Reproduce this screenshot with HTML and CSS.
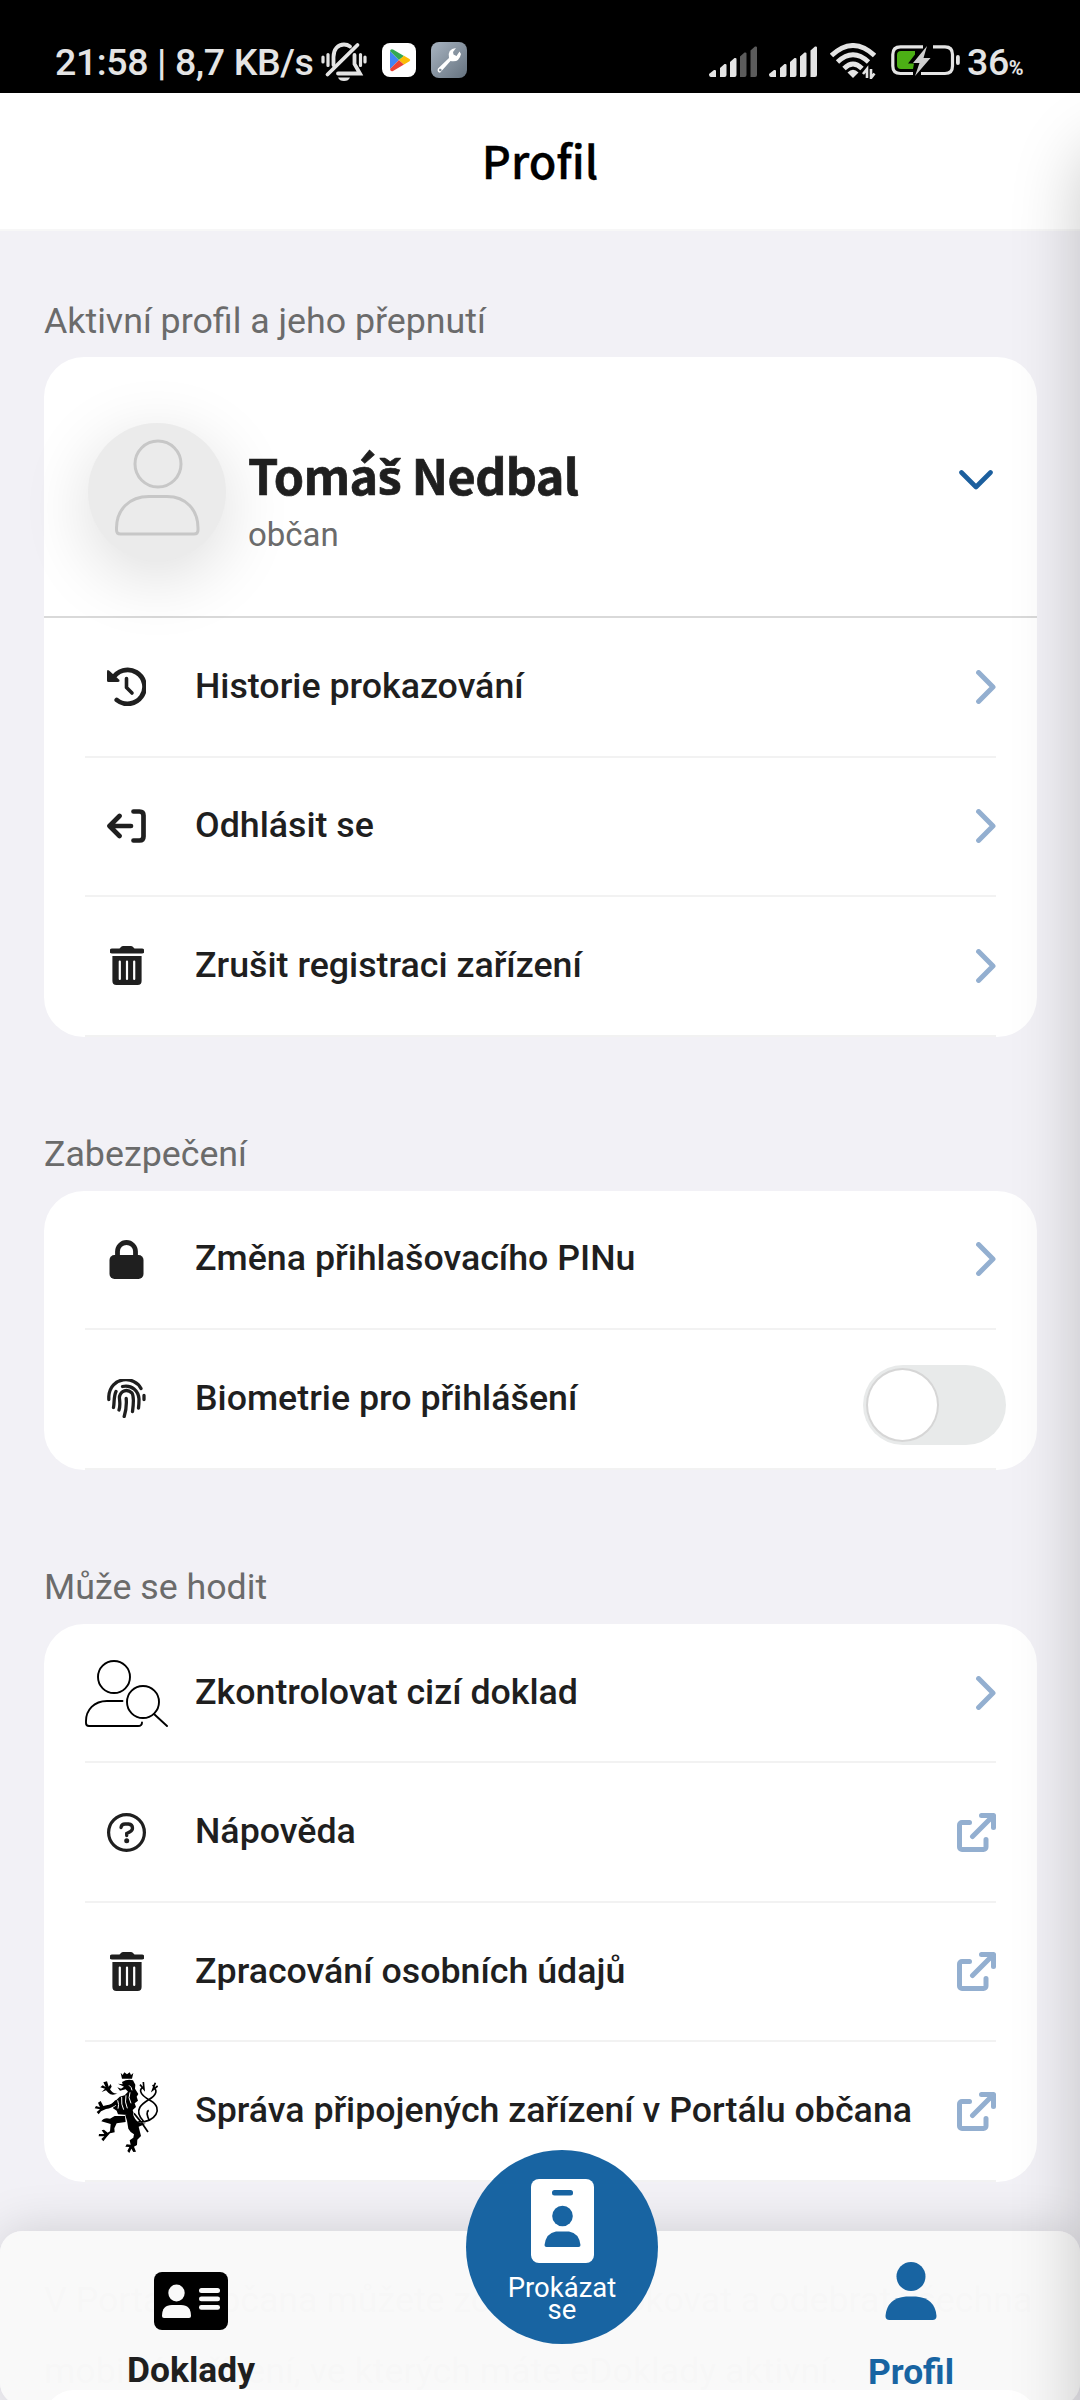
FILE: index.html
```html
<!DOCTYPE html>
<html lang="cs">
<head>
<meta charset="utf-8">
<title>Profil</title>
<link rel="stylesheet" href="styles.css">
</head>
<body>
<svg class="defs" width="0" height="0">
  <symbol id="chevron" viewBox="0 0 20 34"><path d="M2.6 2.6 17 17 2.6 31.4" fill="none" stroke="currentColor" stroke-width="5" stroke-linecap="round" stroke-linejoin="round"/></symbol>
  <symbol id="external" viewBox="0 0 39 39"><path d="M12.5 9.5H5a2.5 2.5 0 0 0-2.500 2.500V34a2.500 2.500 0 0 0 2.500 2.500H26.500a2.500 2.500 0 0 0 2.500-2.500V26.500M24.500 2.500H36.500V14.500M36 3 15.500 23.500" fill="none" stroke="currentColor" stroke-width="5" stroke-linecap="round" stroke-linejoin="round"/></symbol>
  <symbol id="trash" viewBox="0 0 34 39"><path d="M2 2.600H9.500L11.500.6Q12 0 13 0H21Q22 0 22.500.6L24.500 2.600H32A2.400 2.400 0 0 1 32 7.500H2A2.400 2.400 0 0 1 2 2.600ZM2.400 10H31.600V35Q31.600 39 27.600 39H6.400Q2.400 39 2.400 35Z" fill="currentColor"/><path d="M9.800 15.500V33M17 15.500V33M24.200 15.500V33" stroke="#fff" stroke-width="2.200" stroke-linecap="round"/></symbol>
</svg>
<div class="screen">
  <div class="status">
    <span class="clock">21:58 | 8,7 KB/s</span>
    <svg class="bell" width="46" height="40" viewBox="0 0 46 40" fill="none" stroke="#e4e4e4" stroke-width="3.200" stroke-linecap="round"><path d="M2 15v5M7 12.500v11M39.500 12.500v11M44 15v5"/><path d="M12.500 23V15C12.500 7 17 2.500 23 2.500Q26.500 2.500 29 4.500M33.500 13V22L39 31.500H17" stroke-width="3.800"/><path d="M36.500 3 6.500 32.500" stroke-width="3.800"/><path d="M17 35.500H29Q27.500 39 23 39T17 35.500Z" fill="#e4e4e4" stroke="none"/></svg>
    <svg class="play" width="34" height="34" viewBox="0 0 34 34"><rect width="34" height="34" rx="8" fill="#fff"/><path d="M8 8V26L17 17Z" fill="#4285f4"/><path d="M8 8Q8.500 5.500 11 6.500L22 13 17 17Z" fill="#34a853"/><path d="M8 26Q8.500 29 11 28L22 21.500 17 17Z" fill="#ea4335"/><path d="M22 12.800 27.500 16Q29 17 27.500 18.200L22 21.500 17 17Z" fill="#fbbc04"/></svg>
    <svg class="wrench" width="36" height="36" viewBox="0 0 36 36"><defs><linearGradient id="steel" x1="0" y1="0" x2="1" y2="1"><stop stop-color="#a8b4c1"/><stop offset="1" stop-color="#65727f"/></linearGradient></defs><rect width="36" height="36" rx="8" fill="url(#steel)"/><path d="M25 6Q16 7 18 16L7 26.500Q5.500 30 9 30.800L19.500 19Q28 21 30 12L28.500 9.500 25.500 14 22.500 12.500 22 10Z" fill="#fff"/><circle cx="9.300" cy="28" r="1.300" fill="#7e8b98"/></svg>
    <span class="spacer"></span>
    <svg class="signal" width="48" height="32" viewBox="0 0 48 32" fill="#e4e4e4"><path d="M0 28 5 24Q7 23.500 7 25V31H2Q0 31 0 28ZM11 22 15.500 18Q17.500 17.500 17.500 19V29Q17.500 31 15.500 31H11ZM21 16 25.500 12Q27.500 11.500 27.500 13V29Q27.500 31 25.500 31H21Z"/><path d="M31 10.500 35.500 6.500Q37.500 6 37.500 7.500V29Q37.500 31 35.500 31H31ZM41.500 4.500 46 .5Q48 0 48 1.500V29Q48 31 46 31H41.500Z" fill="#5b5b5b"/></svg>
    <svg class="signal2" width="48" height="32" viewBox="0 0 48 32" fill="#e4e4e4"><path d="M0 28 5 24Q7 23.500 7 25V31H2Q0 31 0 28ZM11 22 15.500 18Q17.500 17.500 17.500 19V29Q17.500 31 15.500 31H11ZM21 16 25.500 12Q27.500 11.500 27.500 13V29Q27.500 31 25.500 31H21ZM31 10.500 35.500 6.500Q37.500 6 37.500 7.500V29Q37.500 31 35.500 31H31ZM41.500 4.500 46 .5Q48 0 48 1.500V29Q48 31 46 31H41.500Z"/></svg>
    <svg class="wifi" width="46" height="36" viewBox="0 0 46 36" fill="none" stroke="#e4e4e4" stroke-width="4.800"><path d="M1.500 12.500Q23-7.500 44.500 12.500M7.500 19Q23 4.500 38.500 19M14 25.500Q23 16.500 32 25.500"/><path d="M17.500 29.500Q23 24 28.500 29.500L23 35Z" fill="#e4e4e4" stroke="none"/><path d="M37 35V26L33 31M41 26V35L44.500 30.500" stroke-width="2.600"/></svg>
    <svg class="battery" width="69" height="32" viewBox="0 0 69 32"><path d="M32 1.800H9.500Q1.800 1.800 1.800 9.500V21Q1.800 28.500 9.500 28.500H22M42 1.800H54Q61.500 1.800 61.500 9.500V21Q61.500 28.500 54 28.500H30" fill="none" stroke="#e4e4e4" stroke-width="3.200"/><path d="M10 6H24V9.500L17 18.500H23L22 24H10Q6 24 6 20V10Q6 6 10 6Z" fill="#4caf15"/><path d="M36 1 22 18H28.500L24 31 39.500 13H32.500Z" fill="#cfcfcf"/><rect x="65" y="10" width="3.800" height="10" rx="1.900" fill="#e4e4e4"/></svg>
    <span class="percent">36<small>%</small></span>
  </div>

  <header class="topbar"><h1>Profil</h1></header>

  <main class="content">
    <h2 class="label first">Aktivní profil a jeho přepnutí</h2>
    <section class="card">
      <div class="person">
        <div class="avatar"><svg width="88" height="100" viewBox="0 0 88 100" fill="none" stroke="#c7c7c7" stroke-width="3"><circle cx="44" cy="26" r="23"/><path d="M35 58.500H53C72 58.500 84 72 84 90V92Q84 96 80 96H6.500Q2.500 96 2.500 92V90C2.500 72 15 58.500 35 58.500Z"/></svg></div>
        <div class="who"><div class="name">Tomá<span class="caron">š</span> Nedbal</div><div class="role">občan</div></div>
        <svg class="down" width="34" height="20" viewBox="0 0 34 20"><path d="M2.500 2.500 17 17 31.500 2.500" fill="none" stroke="#1c5f9e" stroke-width="4.600" stroke-linecap="round" stroke-linejoin="round"/></svg>
      </div>
      <div class="rows">
        <div class="row"><span class="icon"><svg width="39" height="39" viewBox="0 0 39 39"><path d="M5.500 12A17 17 0 1 1 9.800 33" fill="none" stroke="currentColor" stroke-width="4.800" stroke-linecap="round"/><path d="M0 4.500Q0 2 2 3.500L12.500 13Q13 15 11 15H1.500Q0 15 0 13.500Z" fill="currentColor"/><path d="M19.500 11.500V20.500L25 26" fill="none" stroke="currentColor" stroke-width="3.600" stroke-linecap="round" stroke-linejoin="round"/></svg></span><span class="text">Historie prokazování</span><svg class="go" width="20" height="34"><use href="#chevron"/></svg></div>
        <div class="row"><span class="icon"><svg width="39" height="34" viewBox="0 0 39 34" fill="none" stroke="currentColor" stroke-width="4.700" stroke-linecap="round" stroke-linejoin="round"><path d="M12.500 7 2.500 17 12.500 27M3.500 17H24M26.500 2.500H32.500Q36.500 2.500 36.500 6.500V27.500Q36.500 31.500 32.500 31.500H26.500"/></svg></span><span class="text">Odhlásit se</span><svg class="go" width="20" height="34"><use href="#chevron"/></svg></div>
        <div class="row"><span class="icon"><svg width="34" height="39"><use href="#trash"/></svg></span><span class="text">Zrušit registraci zařízení</span><svg class="go" width="20" height="34"><use href="#chevron"/></svg></div>
      </div>
    </section>

    <h2 class="label">Zabezpečení</h2>
    <section class="card">
      <div class="rows">
        <div class="row"><span class="icon"><svg width="35" height="39" viewBox="0 0 35 39"><rect x=".5" y="15" width="34" height="24" rx="5" fill="currentColor"/><path d="M8.500 17V11.500A9 9 0 0 1 26.500 11.500V17" fill="none" stroke="currentColor" stroke-width="4.800"/></svg></span><span class="text">Změna přihlašovacího PINu</span><svg class="go" width="20" height="34"><use href="#chevron"/></svg></div>
        <div class="row"><span class="icon"><svg width="39" height="39" viewBox="0 0 39 39" fill="none" stroke="currentColor" stroke-width="3.300" stroke-linecap="round"><path d="M1.800 20.500V17.500C3-3 28-3.500 34 9.500M37 16.500V20.500M6.500 28.500C7.500 23.500 6.500 18 9 12.500M15.500 7.500C25 5.500 31.500 12 32 20Q32 25 31.500 29M12 31C14 25 12 20 12.500 17.500 14 11.500 20 9.500 25 14 27.500 18 26.500 25 25.500 32.500M17.200 37.500Q20 28.500 19.200 19.500"/></svg></span><span class="text">Biometrie pro přihlášení</span><span class="toggle"><span class="knob"></span></span></div>
      </div>
    </section>

    <h2 class="label">Může se hodit</h2>
    <section class="card">
      <div class="rows">
        <div class="row"><span class="icon"><svg class="check" width="83" height="67" viewBox="0 0 83 67" fill="none" stroke="#000" stroke-width="1.900" stroke-linecap="round"><circle cx="29" cy="17" r="16"/><circle cx="58" cy="42" r="16"/><path d="M69 54 82 66M37.500 41H22C9 41 1 50 1 61V63Q1 66 4 66H53Q57 66 57 62.500"/></svg></span><span class="text">Zkontrolovat cizí doklad</span><svg class="go" width="20" height="34"><use href="#chevron"/></svg></div>
        <div class="row"><span class="icon"><svg width="39" height="39" viewBox="0 0 39 39" fill="none" stroke="currentColor" stroke-linecap="round"><circle cx="19.500" cy="19.500" r="17.900" stroke-width="3.200"/><path d="M14 14.500Q14.500 11 18 11H21.500Q25.500 11.500 25.500 15 25.500 17.500 23 18.700L19.700 20.500V22.500" stroke-width="3.300"/><circle cx="19.700" cy="27.700" r="2.500" fill="currentColor" stroke="none"/></svg></span><span class="text">Nápověda</span><svg class="go" width="39" height="39"><use href="#external"/></svg></div>
        <div class="row"><span class="icon"><svg width="34" height="39"><use href="#trash"/></svg></span><span class="text">Zpracování osobních údajů</span><svg class="go" width="39" height="39"><use href="#external"/></svg></div>
        <div class="row"><span class="icon"><svg class="lion" width="66" height="82" viewBox="40 38 198 246"><g fill="#000"><path d="M120 40 126 47 131 39 139 45 147 39 151 47 158 41 154 58H124ZM124 68Q140 58 157 63L164 76 163 88 173 104 168 112 172 124 162 132 166 143 156 152 159 162 150 168 112 165 108 154 96 146 107 138 96 132 107 122 117 112 132 108 142 97 135 90 118 94 110 84 121 88 130 82 112 73 126 75Z"/><path d="M112 102Q93 111 83 100L76 93 63 98 73 88 59 84 66 78 75 83 68 69 79 66 84 82 90 74 93 82 88 90Q97 105 112 102ZM112 132Q93 148 76 149L61 156 54 165 48 158 58 150 42 147 46 140 58 144 52 130 60 125 68 140 77 138Q94 137 104 122ZM62 186Q70 173 88 178L102 170H133L135 188 108 192 101 207 102 219 88 222 78 233 68 246 62 239 71 231 54 231 55 224 71 224 63 213 70 211 81 220 88 216 90 194ZM134 168 155 158Q162 186 178 191L195 193 174 202 181 230 170 241 169 257 160 262 166 277 158 278 152 268 146 281 140 275 146 263 134 262 138 255 150 256 147 243 158 235 160 225 150 218 143 208 139 184Z"/></g><path d="M170 188C225 190 250 147 210 124 170 103 177 87 190 82M188 185C150 145 200 125 212 116 236 98 223 86 216 77M178 76 190 90 188 68M224 70 216 92 231 80M160 162Q185 190 202 218M206 184Q194 159 204 153" fill="none" stroke="#000" stroke-width="5"/><g fill="none" stroke="#fff" stroke-width="3"><path d="M111 123Q116 136 112 148M123 113Q121 137 129 151M136 108Q131 128 140 147M148 99Q141 115 151 132M145 78Q153 83 154 93"/></g></svg></span><span class="text">Správa připojených zařízení v Portálu občana</span><svg class="go" width="39" height="39"><use href="#external"/></svg></div>
      </div>
    </section>
    <p class="note">V Portálu občana můžete zobrazit, blokovat a odebrat všechna<br>mobilní zařízení, ve kterých máte eDoklady aktivní.</p>
  </main>

  <nav class="tabs">
    <div class="peek"></div>
    <div class="tab docs"><svg width="74" height="58" viewBox="0 0 74 58"><rect width="74" height="58" rx="8"/><g fill="#f9f9f9"><ellipse cx="22.500" cy="21" rx="8.200" ry="8.500"/><path d="M8 44Q8 33 18 33H27Q37 33 37 44 37 46 35 46H10Q8 46 8 44Z"/><rect x="45" y="16" width="21" height="5" rx="2.500"/><rect x="45" y="24.500" width="21" height="4.700" rx="2.300"/><rect x="45" y="33" width="21" height="4.700" rx="2.300"/></g></svg><span>Doklady</span></div>
    <div class="tab me"><svg width="52" height="58" viewBox="0 0 52 58" fill="#1864a2"><circle cx="26" cy="14.500" r="14.500"/><path d="M21 34.500H31Q50 36 51.500 54 51.500 58 47.500 58H4.500Q.5 58 .5 54 2 36 21 34.500Z"/></svg><span>Profil</span></div>
    <div class="prove"><svg width="63" height="84" viewBox="0 0 63 84"><rect width="63" height="84" rx="8" fill="#fff"/><g fill="#1864a2"><rect x="21" y="11" width="21" height="5.500" rx="2.500"/><circle cx="31.500" cy="37" r="10.300"/><path d="M25 52.500H38Q48 54 49.500 66 49.500 68 47.500 68H15.500Q13.500 68 13.500 66 15 54 25 52.500Z"/></g></svg><span>Prokázat<br>se</span></div>
  </nav>
  <div class="edge"></div>
</div>
</body>
</html>
```
FILE: styles.css
```css
* { box-sizing: border-box; }
body { margin: 0; font-family: Roboto, sans-serif; color: #1f1f1f; }
.defs { position: absolute; }
.screen { position: relative; width: 1080px; height: 2400px; overflow: hidden; background: #f2f1f6; display: flex; flex-direction: column; }
svg { display: block; flex: none; }
.status { height: 93px; flex: none; background: #000; color: #e4e4e4; display: flex; align-items: flex-start; padding: 42px 56px 0 55px; white-space: nowrap; position: relative; z-index: 5; }
.clock { width: 266px; font-size: 37.500px; letter-spacing: -.4px; line-height: 40px; font-weight: 500; }
.play { margin: 1px 0 0 15px; }
.wrench { margin-left: 15px; }
.spacer { flex: 1; }
.signal, .signal2 { margin: 4px 12px 0 0; }
.wifi { margin: 1px 15px 0 1px; }
.battery { margin: 3px 7px 0 0; }
.percent { width: 57px; font-size: 37.500px; line-height: 40px; font-weight: 500; letter-spacing: -.4px; }
.percent small { font-size: 20px; font-weight: 700; }
.topbar { height: 138px; flex: none; background: #fff; border-bottom: 2px solid #f7f7f7; display: flex; align-items: center; justify-content: center; }
.topbar h1 { margin: -2px 0 0; font: 500 45px/60px "Noto Sans CJK SC", sans-serif; color: #000; -webkit-text-stroke: .3px #000; }
.content { padding: 0 43px 0 44px; }
.label { margin: 0; height: 154.200px; padding-bottom: 16px; display: flex; align-items: flex-end; font-size: 35.750px; line-height: 41px; font-weight: 400; color: #6b6b6b; }
.label.first { height: 126px; padding-bottom: 15px; }
.card { background: #fff; border-radius: 40px; }
.person { height: 261px; border-bottom: 2px solid #d9d9d9; padding: 66px 44px 0; display: flex; align-items: flex-start; }
.avatar { width: 138px; height: 138px; border-radius: 50%; background: #ebebeb; box-shadow: 0 16px 70px rgba(0,0,0,.14); padding: 15px 0 0 26px; }
.who { padding: 17px 0 0 22px; flex: 1; }
.name { font: 700 48.500px/68px "Noto Sans CJK SC", sans-serif; height: 68px; letter-spacing: -.6px; white-space: nowrap; -webkit-text-stroke: .7px #1f1f1f; }
.caron { font-family: "Noto Sans", sans-serif; line-height: 1; }
.role { margin-top: 7px; font-size: 33px; line-height: 40px; color: #6b6b6b; }
.down { margin-top: 47px; }
.rows { padding: 0 41px; }
.row { height: 139.500px; border-bottom: 2px solid #f2f2f2; display: flex; align-items: center; }
.icon { width: 83px; margin-right: 27px; display: flex; justify-content: center; }
.check { margin-top: 2px; }
.lion { margin-top: 4px; }
.text { flex: 1; padding-bottom: 2px; font-size: 35.750px; line-height: 42px; font-weight: 500; white-space: nowrap; }
.go { color: #93afd0; }
.toggle { width: 143px; height: 80px; margin: 13px -10px 0 0; border-radius: 40px; background: #e8eaea; padding: 3px; }
.knob { display: block; width: 73px; height: 74px; border-radius: 50%; background: #fff; border: 2px solid #d6d6d6; }
.note { margin: 83px -40px 0 0; font-size: 35.750px; line-height: 71px; color: #6b6b6b; white-space: nowrap; }
.tabs { position: absolute; left: 0; right: 0; top: 2231px; height: 174px; border-radius: 22px; background: rgba(249,249,249,.986); box-shadow: 0 0 50px rgba(0,0,0,.15); display: flex; justify-content: space-between; padding: 41px 84px 0 106px; font-size: 35.400px; font-weight: 700; }
.tab { position: relative; width: 170px; display: flex; flex-direction: column; align-items: center; line-height: 40px; }
.tab span { margin-top: 20px; }
.me { color: #1864a2; margin-top: -10px; }
.me span { margin-top: 32px; }
.prove { position: absolute; left: 466px; top: -81px; width: 192px; height: 194px; border-radius: 50%; background: #1864a2; color: #fff; display: flex; flex-direction: column; align-items: center; padding-top: 29px; font-size: 27.500px; line-height: 22px; font-weight: 400; text-align: center; }
.prove span { margin-top: 14px; }
.peek { position: absolute; left: 44px; right: 43px; top: 159px; height: 60px; border-radius: 40px; background: #fff; }
.edge { position: absolute; left: 1080px; top: 145px; width: 300px; height: 2500px; border-radius: 40px; box-shadow: 0 0 68px rgba(0,0,0,.21); }
```
